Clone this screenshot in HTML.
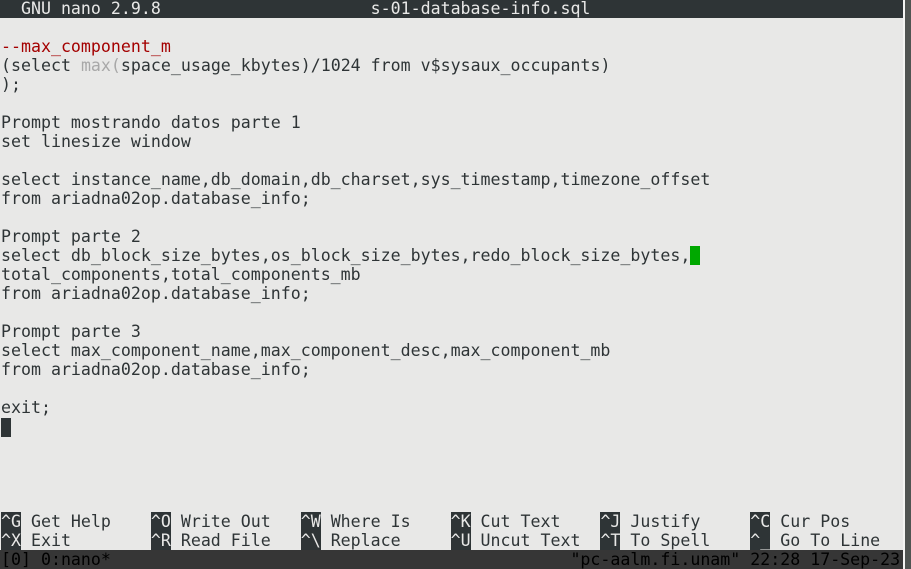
<!DOCTYPE html><html><head><meta charset="utf-8"><style>
body{margin:0;width:911px;height:569px;background:#e8e8e7;overflow:hidden;position:relative;font-family:"DejaVu Sans Mono","Liberation Mono",monospace;font-size:16.6px;color:#2e3436}
.r{position:absolute;left:1px;height:19px;line-height:19px;white-space:pre;margin-top:-1px}
.bar{position:absolute;left:0;width:903px;background:#2e3436}
.k{background:#2e3436;color:#e8e8e7}
.red{color:#a40000}.g{color:#a8a8a8}
.rs{position:absolute;left:903px;top:0;width:2px;height:569px;background:#f4f4f3}
.rs2{position:absolute;left:905px;top:0;width:6px;height:569px;background:#505452}
</style></head><body>
<div class="bar" style="top:0;height:18px"></div>
<div class="r" style="top:0px;color:#e8e8e7">  GNU nano 2.9.8                     s-01-database-info.sql</div>
<div class="r red" style="top:38px">--max_component_m</div>
<div class="r" style="top:57px">(select <span class="g">max(</span>space_usage_kbytes)/1024 from v$sysaux_occupants)</div>
<div class="r" style="top:76px">);</div>
<div class="r" style="top:114px">Prompt mostrando datos parte 1</div>
<div class="r" style="top:133px">set linesize window</div>
<div class="r" style="top:171px">select instance_name,db_domain,db_charset,sys_timestamp,timezone_offset</div>
<div class="r" style="top:190px">from ariadna02op.database_info;</div>
<div class="r" style="top:228px">Prompt parte 2</div>
<div class="r" style="top:247px">select db_block_size_bytes,os_block_size_bytes,redo_block_size_bytes,<span style="background:#00a800"> </span></div>
<div class="r" style="top:266px">total_components,total_components_mb</div>
<div class="r" style="top:285px">from ariadna02op.database_info;</div>
<div class="r" style="top:323px">Prompt parte 3</div>
<div class="r" style="top:342px">select max_component_name,max_component_desc,max_component_mb</div>
<div class="r" style="top:361px">from ariadna02op.database_info;</div>
<div class="r" style="top:399px">exit;</div>
<div class="r" style="top:419px"><span class="k"> </span></div>
<div class="r" style="top:513px"><span class="k">^G</span> Get Help    <span class="k">^O</span> Write Out   <span class="k">^W</span> Where Is    <span class="k">^K</span> Cut Text    <span class="k">^J</span> Justify     <span class="k">^C</span> Cur Pos</div>
<div class="r" style="top:532px"><span class="k">^X</span> Exit        <span class="k">^R</span> Read File   <span class="k">^\</span> Replace     <span class="k">^U</span> Uncut Text  <span class="k">^T</span> To Spell    <span class="k">^_</span> Go To Line</div>
<div class="bar" style="top:550px;height:19px;background:#363636"></div>
<div class="r" style="top:551px;color:#000">[0] 0:nano*                                              "pc-aalm.fi.unam" 22:28 17-Sep-23</div>
<div class="rs"></div><div class="rs2"></div>
</body></html>
